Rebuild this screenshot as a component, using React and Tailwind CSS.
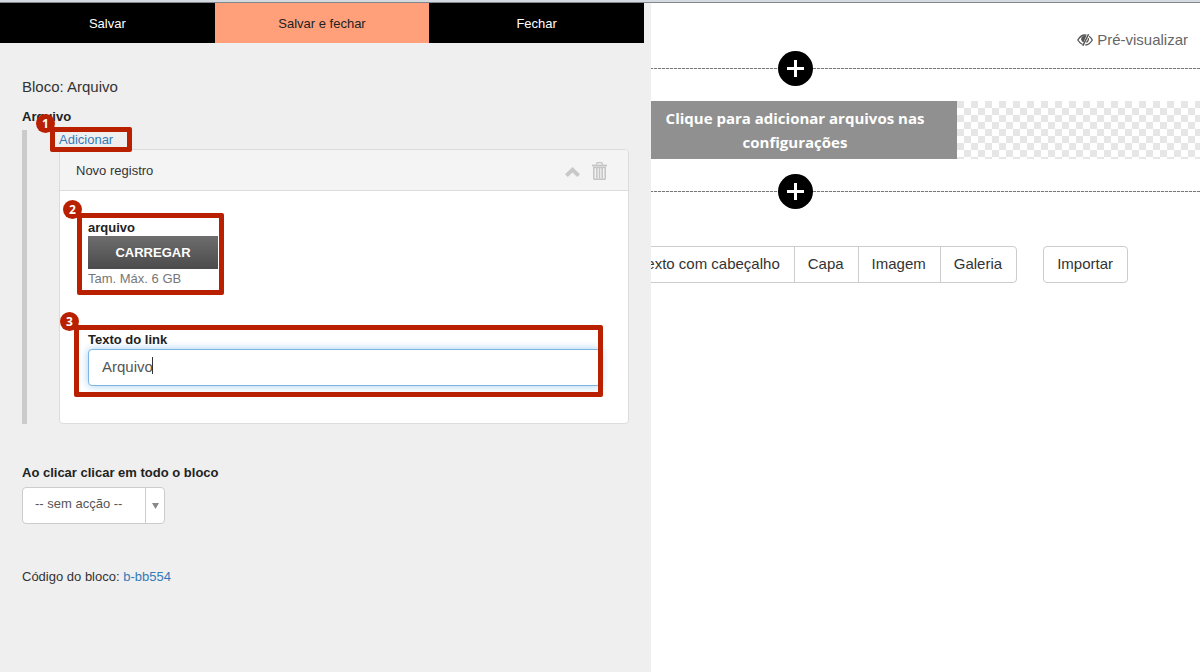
import React, { useState } from 'react'

const blockTypes = ['Texto com cabeçalho', 'Capa', 'Imagem', 'Galeria'];

const ChevronUpIcon = () => (
    <svg width="15" height="10" viewBox="0 0 15 10" fill="#c8c8c8" aria-hidden="true">
        <path d="M7.5 0 L15 7.2 L12.2 10 L7.5 5.6 L2.8 10 L0 7.2 Z" />
    </svg>
);

const TrashIcon = () => (
    <svg width="15" height="18" viewBox="0 0 15 18" fill="none" stroke="#c4c4c4" aria-hidden="true">
        <path d="M4.7 2.8 V1.6 Q4.7 0.7 5.6 0.7 H9.4 Q10.3 0.7 10.3 1.6 V2.8" strokeWidth="1.3" />
        <path d="M0 3.5 H15" strokeWidth="1.8" />
        <path d="M1.8 5.6 H13.2 V16.4 Q13.2 17.3 12.3 17.3 H2.7 Q1.8 17.3 1.8 16.4 Z" strokeWidth="1.5" />
        <path d="M4.8 6 V16.5 M7.5 6 V16.5 M10.2 6 V16.5" strokeWidth="1.5" />
    </svg>
);

const EyeCloseIcon = () => (
    <svg width="16" height="12" viewBox="0 0 16 12" fill="none" stroke="#555" aria-hidden="true">
        <path d="M9.4 1.2 Q8.7 1 8 1 Q3.8 1 0.8 6 Q2.8 9.4 5.6 10.5" strokeWidth="1.3" />
        <path d="M12.2 2.3 Q14 3.6 15.3 6 Q12.4 10.8 8.3 11" strokeWidth="1.3" />
        <path d="M11.6 0.2 L5.8 11.8" strokeWidth="1.5" />
        <path d="M9.4 1.6 Q4.2 1.6 4.2 5.2 Q4.3 7.6 6.4 8.6 Z" fill="#555" stroke="none" />
        <path d="M11.4 4.2 Q11.8 7 9.4 8.6" strokeWidth="1.2" />
    </svg>
);

const PlusIcon = () => (
    <svg width="17" height="17" viewBox="0 0 17 17" stroke="#fff" strokeWidth="3" aria-hidden="true">
        <path d="M8.5 0 V17 M0 8.5 H17" />
    </svg>
);

// Red frame with its step number, laid over the parent
const Callout = ({ step, className }) => (
    <div className={`pointer-events-none absolute rounded-xs border-[5px] border-[#b92000] ${className}`}>
        <span className="absolute -top-[18px] -left-[19px] flex size-[19px] items-center justify-center rounded-full bg-[#b92000] font-['Open_Sans'] text-xs font-bold text-white">
            {step}
        </span>
    </div>
);

const AddDivider = () => (
    <div className="flex items-center">
        <span className="h-px flex-1 bg-[repeating-linear-gradient(90deg,#777_0_3px,#eee_3px_4px)]"></span>
        <button aria-label="Adicionar bloco" className="flex size-[35px] items-center justify-center rounded-full bg-black">
            <PlusIcon />
        </button>
        <span className="h-px flex-1 bg-[repeating-linear-gradient(90deg,#777_0_3px,#eee_3px_4px)]"></span>
    </div>
);

const RecordCard = () => {

    const [linkText, setLinkText] = useState('Arquivo');

    return (
        <div className="rounded-sm border border-[#dcdcdc] bg-white">
            <div className="flex h-[41px] items-center justify-between rounded-t-sm border-b border-[#dcdcdc] bg-[#f4f4f4] pt-0.5 pr-[21px] pl-4">
                <p>Novo registro</p>
                <div className="flex items-center gap-3">
                    <button aria-label="Recolher" className="pt-0.5"><ChevronUpIcon /></button>
                    <button aria-label="Excluir"><TrashIcon /></button>
                </div>
            </div>

            <div className="flex flex-col gap-8 pt-[27px] pr-[27px] pb-[37px] pl-7">
                <div className="relative w-[130px]">
                    <label htmlFor="upload" className="block pt-0.5 leading-4 font-bold text-[#222]">arquivo</label>
                    <button id="upload" className="block h-[33px] w-full bg-linear-to-b from-[#6e6e6e] to-[#4b4b4b] font-bold text-white">
                        CARREGAR
                    </button>
                    <p className="leading-5 text-[#777]">Tam. Máx. 6 GB</p>
                    <Callout step={2} className="-top-[5px] -right-[6px] -bottom-[6px] -left-[11px]" />
                </div>

                <div className="relative mt-2">
                    <label htmlFor="linkText" className="block pt-0.5 leading-[18px] font-bold text-[#222]">Texto do link</label>
                    <input
                        id="linkText"
                        value={linkText}
                        onChange={(e) => setLinkText(e.target.value)}
                        className="block h-[37px] w-full rounded-sm border border-[#7ab5e4] bg-white px-[13px] pb-[3px] text-[15px] text-[#555] shadow-[0_0_8px_rgba(102,175,233,0.6)] outline-none"
                    />
                    <span className="absolute top-7 left-16 h-[17px] w-px bg-[#333]"></span>
                    <Callout step={3} className="-top-1 -right-[2px] -bottom-[11px] -left-[14px]" />
                </div>
            </div>
        </div>
    );
}

const SettingsPanel = () => {
    return (
        <aside className="bg-[#efefef] text-[13px] text-[#333]">
            <div className="mr-[7px] grid h-10 grid-cols-3">
                <button className="bg-black pt-0.5 text-white">Salvar</button>
                <button className="bg-[#ffa07a] pt-0.5 text-[#222]">Salvar e fechar</button>
                <button className="bg-black pt-0.5 text-white">Fechar</button>
            </div>

            <div className="px-[22px] pt-8">
                <h1 className="text-[15px] leading-6">Bloco: Arquivo</h1>
                <h2 className="mt-2 leading-5 font-bold text-[#222]">Arquivo</h2>

                <div className="mt-[3px] border-l-[5px] border-[#cbcbcb] pl-8">
                    <div className="relative w-fit">
                        <a href="#adicionar" className="block leading-[19px] text-[#337ab7]">Adicionar</a>
                        <Callout step={1} className="-top-[3px] -right-[19px] -bottom-[3px] -left-[9px]" />
                    </div>
                    <RecordCard />
                </div>

                <label htmlFor="action" className="mt-[39px] block leading-5 font-bold text-[#222]">Ao clicar clicar em todo o bloco</label>
                <div className="relative mt-1 w-[143px]">
                    <select id="action" className="block h-[37px] w-full appearance-none rounded-sm border border-[#ccc] bg-white px-3 pb-[3px] text-[#555]">
                        <option>-- sem acção --</option>
                    </select>
                    <span className="pointer-events-none absolute inset-y-px right-px flex w-[19px] items-center justify-center border-l border-[#ccc]">
                        <svg width="7" height="6" viewBox="0 0 7 6" fill="#888" aria-hidden="true"><path d="M0 0 H7 L3.5 6 Z" /></svg>
                    </span>
                </div>

                <p className="mt-[43px] leading-5">
                    Código do bloco: <a href="#b-bb554" className="text-[#337ab7]">b-bb554</a>
                </p>
            </div>
        </aside>
    );
}

const PageCanvas = () => {
    return (
        <main className="flex justify-end overflow-hidden bg-white text-[15px] text-[#333]">
            {/* the page keeps its own width and slides under the panel */}
            <div className="w-[810px] shrink-0">
                <div className="flex justify-end pt-[26px] pr-3">
                    <a href="#preview" className="flex items-center gap-1 leading-[22px] text-[#666]">
                        <EyeCloseIcon />
                        Pré-visualizar
                    </a>
                </div>

                <AddDivider />
                <div className="my-[15px] bg-[repeating-conic-gradient(#e6e6e6_0_25%,#fff_0_50%)] bg-size-[14px_14px]">
                    <p className="mx-auto w-2/5 bg-[#909090] px-5 py-[5px] text-center font-['Open_Sans'] leading-6 font-bold text-white">
                        Clique para adicionar arquivos nas configurações
                    </p>
                </div>
                <AddDivider />

                <div className="mt-[37px] flex justify-end gap-[26px] pr-[72px]">
                    <div className="flex divide-x divide-[#ccc] rounded-sm border border-[#ccc]">
                        {blockTypes.map((type) => (
                            <button key={type} className="h-[35px] pr-3.5 pl-[13px]">{type}</button>
                        ))}
                    </div>
                    <button className="rounded-sm border border-[#ccc] pr-3.5 pl-[13px]">Importar</button>
                </div>
            </div>
        </main>
    );
}

const App = () => {
    return (
        <div className="flex min-h-screen flex-col font-['Liberation_Sans',Arial,sans-serif]">
            <div className="h-[3px] border-b border-[#83878d] bg-[#d5d9e0]"></div>
            <div className="grid flex-1 grid-cols-[651fr_549fr]">
                <SettingsPanel />
                <PageCanvas />
            </div>
        </div>
    )
}

export default App
